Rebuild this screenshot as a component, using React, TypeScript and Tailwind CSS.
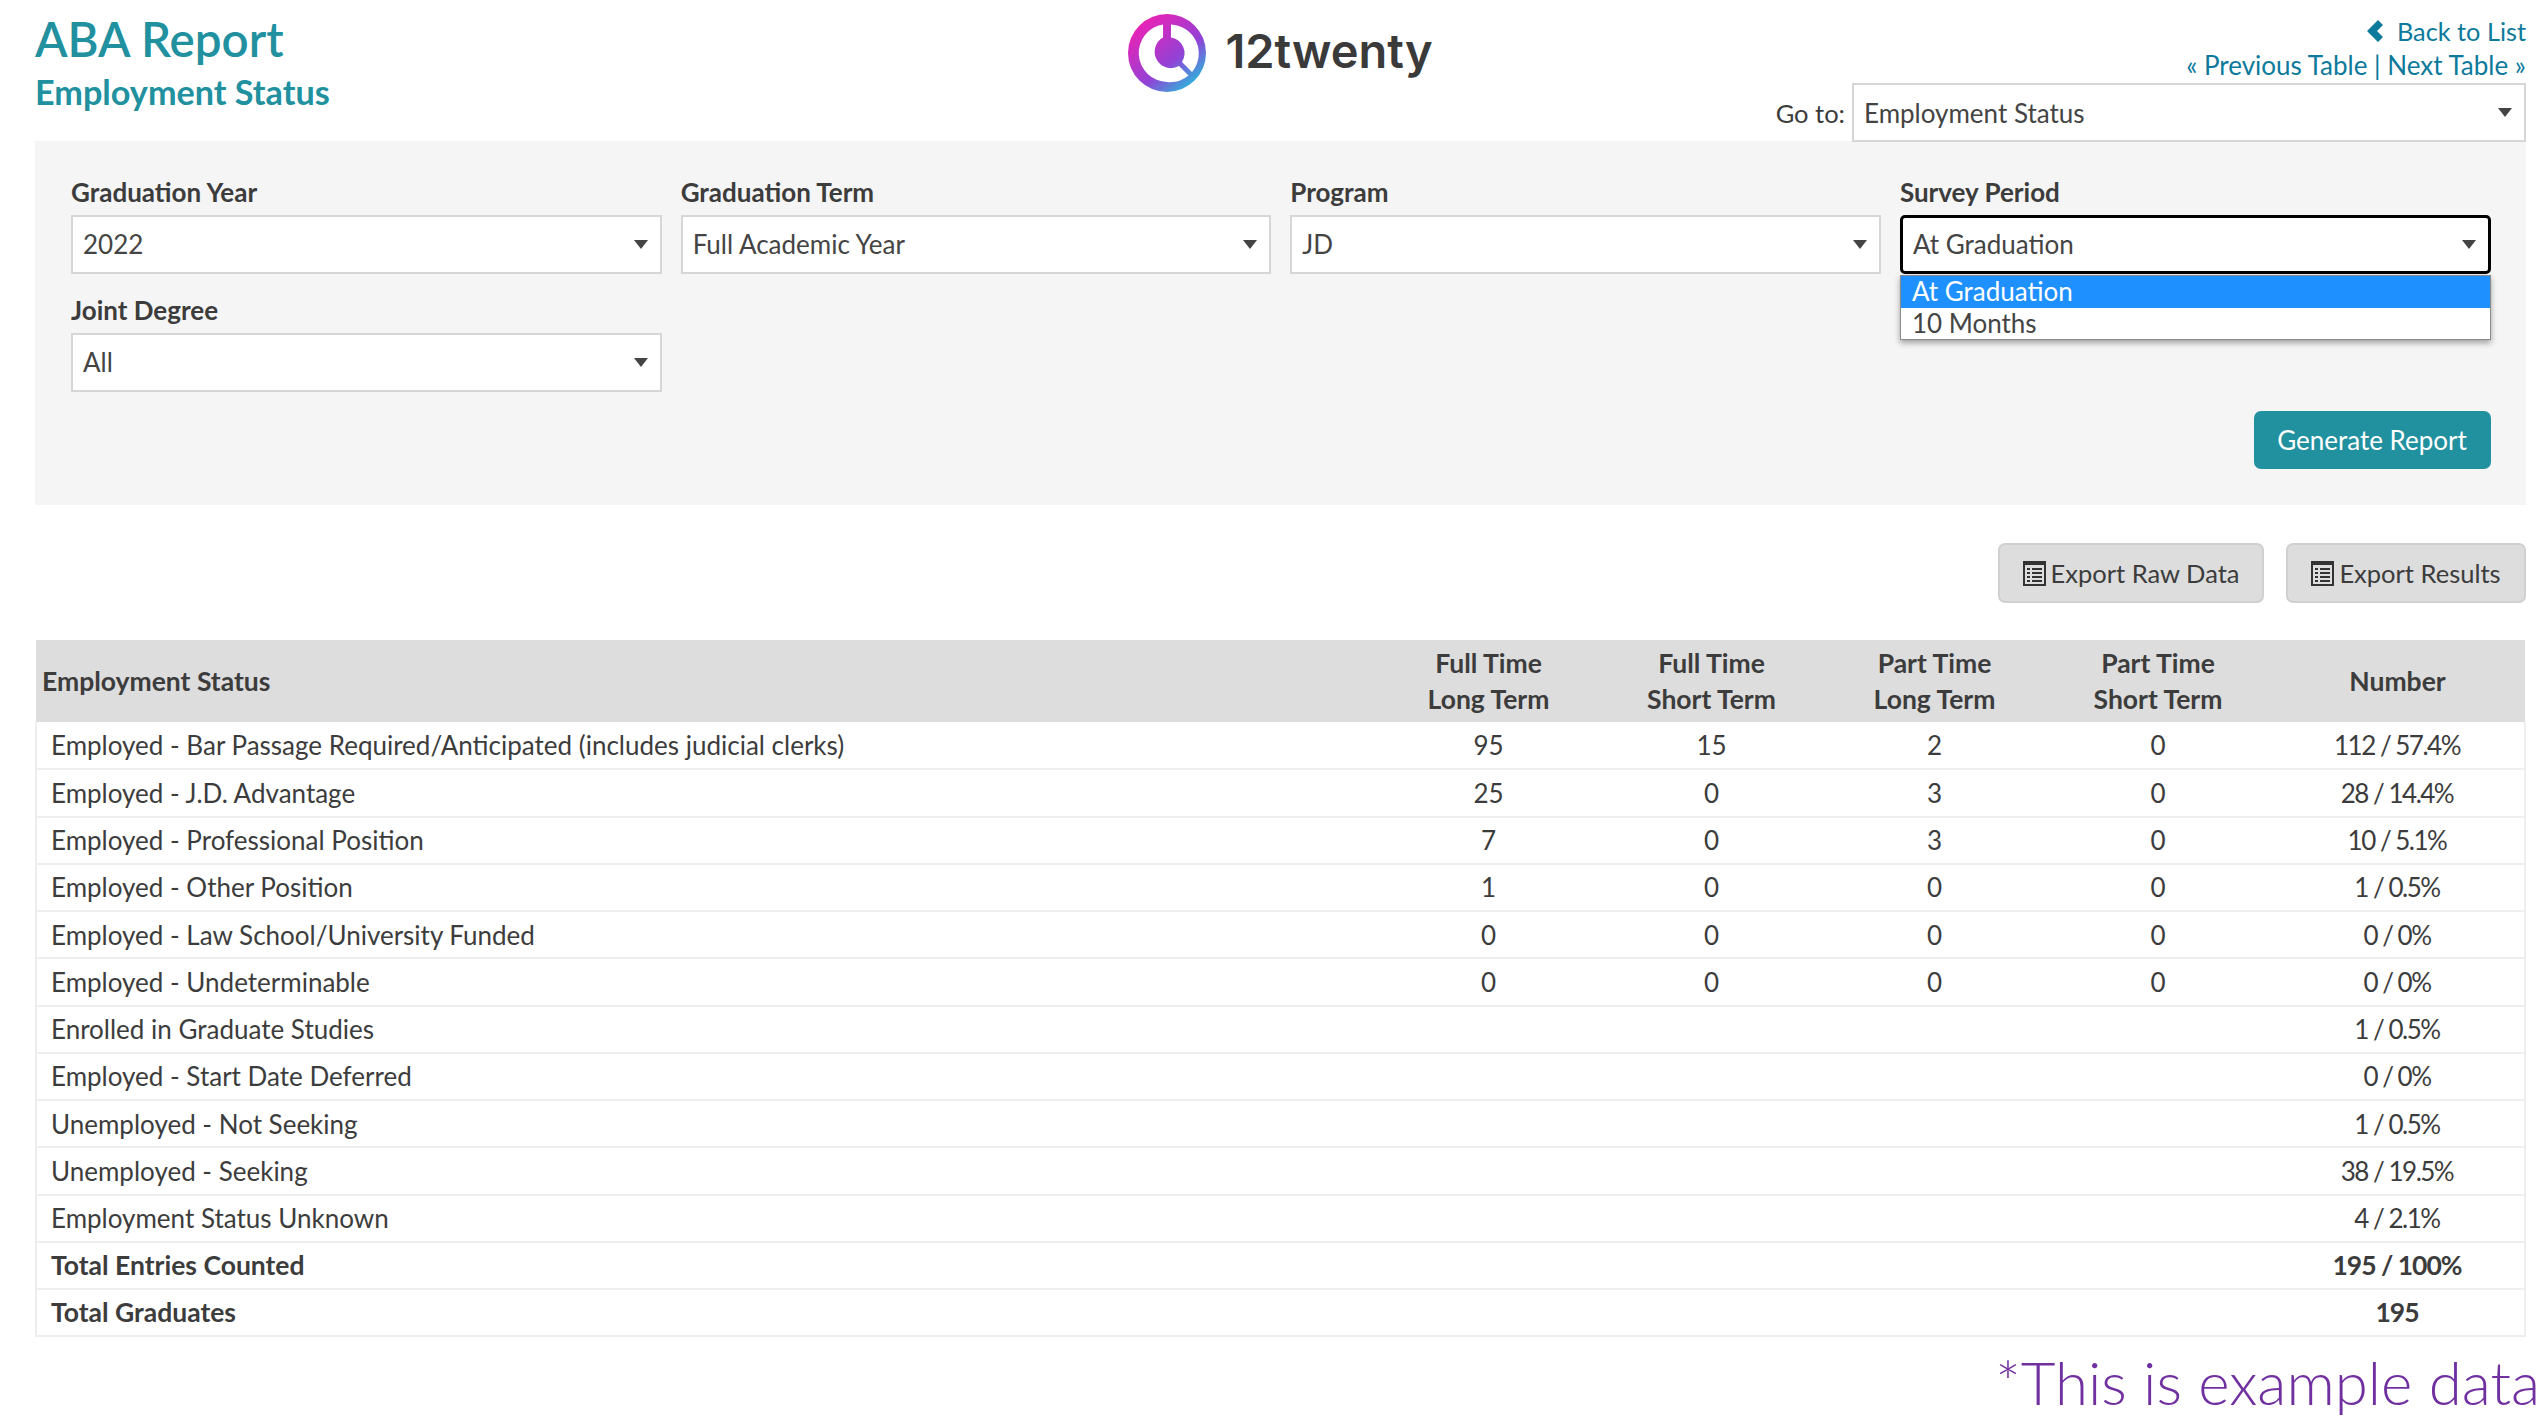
import React from 'react';

const rows = [
  { label: 'Employed - Bar Passage Required/Anticipated (includes judicial clerks)', cols: ['95', '15', '2', '0'], number: '112 / 57.4%' },
  { label: 'Employed - J.D. Advantage', cols: ['25', '0', '3', '0'], number: '28 / 14.4%' },
  { label: 'Employed - Professional Position', cols: ['7', '0', '3', '0'], number: '10 / 5.1%' },
  { label: 'Employed - Other Position', cols: ['1', '0', '0', '0'], number: '1 / 0.5%' },
  { label: 'Employed - Law School/University Funded', cols: ['0', '0', '0', '0'], number: '0 / 0%' },
  { label: 'Employed - Undeterminable', cols: ['0', '0', '0', '0'], number: '0 / 0%' },
  { label: 'Enrolled in Graduate Studies', cols: ['', '', '', ''], number: '1 / 0.5%' },
  { label: 'Employed - Start Date Deferred', cols: ['', '', '', ''], number: '0 / 0%' },
  { label: 'Unemployed - Not Seeking', cols: ['', '', '', ''], number: '1 / 0.5%' },
  { label: 'Unemployed - Seeking', cols: ['', '', '', ''], number: '38 / 19.5%' },
  { label: 'Employment Status Unknown', cols: ['', '', '', ''], number: '4 / 2.1%' },
  { label: 'Total Entries Counted', cols: ['', '', '', ''], number: '195 / 100%', bold: true },
  { label: 'Total Graduates', cols: ['', '', '', ''], number: '195', bold: true },
];

function Logo() {
  return (
    <svg width="78" height="78" viewBox="0 0 78 78">
      <defs>
        <linearGradient id="logoGrad" x1="0.15" y1="0.1" x2="0.85" y2="0.95">
          <stop offset="0" stopColor="#ec22b4" />
          <stop offset="0.6" stopColor="#9242d6" />
          <stop offset="1" stopColor="#22c0dc" />
        </linearGradient>
      </defs>
      <path
        fillRule="evenodd"
        fill="url(#logoGrad)"
        d="M39 0a39 39 0 1 0 0 78a39 39 0 1 0 0-78ZM35 10.4V23.5a16 16 0 1 0 16 28.5l9.5 9.5a29 29 0 0 1-21.5 6.5a29 29 0 0 1-4-57.6ZM43 10.4a29 29 0 0 1 21 47.6l-10 -10a16 16 0 0 0-11-24.5Z"
      />
    </svg>
  );
}

function Caret() {
  return <span className="w-0 h-0 border-l-[7px] border-r-[7px] border-t-[9px] border-l-transparent border-r-transparent border-t-[#444]" />;
}

function SelectBox({ value, focused }: { value: string; focused?: boolean }) {
  return (
    <div
      className={`h-[59px] bg-white flex items-center justify-between pl-[10px] pr-[12px] text-[26px] text-[#444] ${
        focused ? 'border-[3px] border-black rounded-[5px]' : 'border-2 border-[#d6d6d6]'
      }`}
    >
      <span>{value}</span>
      <Caret />
    </div>
  );
}

function Field({ label, value, focused, children }: { label: string; value: string; focused?: boolean; children?: React.ReactNode }) {
  return (
    <div className="relative">
      <div className="h-[47px] pt-[6px] text-[26px] font-bold text-[#3c3c3c] leading-[36px]">{label}</div>
      <SelectBox value={value} focused={focused} />
      {children}
    </div>
  );
}

function ListIcon() {
  return (
    <svg width="23" height="25" viewBox="0 0 23 25" className="shrink-0">
      <rect x="1" y="1" width="21" height="23" fill="none" stroke="#333" strokeWidth="2" />
      <rect x="1" y="1" width="21" height="3" fill="#333" />
      <g fill="#333">
        <rect x="4" y="7" width="3" height="2" />
        <rect x="9" y="7" width="10" height="2" />
        <rect x="4" y="11" width="3" height="2" />
        <rect x="9" y="11" width="10" height="2" />
        <rect x="4" y="15" width="3" height="2" />
        <rect x="9" y="15" width="10" height="2" />
        <rect x="4" y="19" width="3" height="2" />
        <rect x="9" y="19" width="10" height="2" />
      </g>
    </svg>
  );
}

function ExportButton({ label, width }: { label: string; width: string }) {
  return (
    <button className={`${width} h-[60px] bg-[#dddddd] border-2 border-[#d0d0d0] rounded-[7px] flex items-center justify-center gap-[5px] text-[25.5px] text-[#3c3c3c]`}>
      <ListIcon />
      <span>{label}</span>
    </button>
  );
}

export default function App() {
  return (
    <div className="w-[2545px] h-[1420px] bg-white overflow-hidden pl-[35px] pr-[19px] font-['Lato','Liberation_Sans',sans-serif] text-[#3c3c3c]">
      {/* Header */}
      <div className="h-[141px] grid grid-cols-[1fr_auto_1fr] relative z-10">
        <div className="pt-[11px]">
          <h1 className="text-[47.5px] font-semibold leading-[56px] text-[#21909f]">ABA Report</h1>
          <h2 className="text-[34.2px] font-bold leading-[40px] mt-[5px] text-[#21909f]">Employment Status</h2>
        </div>
        <div className="flex items-start gap-[19px] pt-[14px]">
          <Logo />
          <span className="text-[47px] font-semibold leading-[74px] text-[#3a3a3a] font-['Inter',sans-serif]">12twenty</span>
        </div>
        <div className="flex flex-col items-end text-[#0d7a9c] pt-[14px] leading-[34px]">
          <a className="flex items-center gap-[14px] text-[25.3px]">
            <svg width="16" height="22" viewBox="0 0 16 22" fill="#0d7a9c">
              <polygon points="11,0 16,5 10,11 16,17 11,22 0,11" />
            </svg>
            <span>Back to List</span>
          </a>
          <div className="text-[26px]">« Previous Table | Next Table »</div>
          <div className="flex items-center mt-[1px] w-full justify-end text-[#3c3c3c] text-[25.5px]">
            <span className="mr-[7px]">Go to:</span>
            <div className="w-[674px]">
              <SelectBox value="Employment Status" />
            </div>
          </div>
        </div>
      </div>

      {/* Filter panel */}
      <div className="h-[364px] bg-[#f5f5f5] pt-[27px] pl-[36px] pr-[35.5px] relative">
        <div className="grid grid-cols-4 gap-x-[19px] gap-y-[12px]">
          <Field label="Graduation Year" value="2022" />
          <Field label="Graduation Term" value="Full Academic Year" />
          <Field label="Program" value="JD" />
          <Field label="Survey Period" value="At Graduation" focused>
            <div className="absolute left-0 right-0 top-[107px] h-[65px] bg-white border border-[#8a8a8a] shadow-[0_3px_6px_rgba(0,0,0,0.35)] z-20 text-[26px] text-[#444] leading-[31px]">
              <div className="bg-[#1e90ff] text-white pl-[11px] h-[32px]">At Graduation</div>
              <div className="pl-[11px] h-[31px]">10 Months</div>
            </div>
          </Field>
          <Field label="Joint Degree" value="All" />
        </div>
        <div className="flex justify-end mt-[19px]">
          <button className="w-[237px] h-[58px] rounded-[7px] bg-[#21909f] text-white text-[26px]">Generate Report</button>
        </div>
      </div>

      {/* Export buttons */}
      <div className="flex justify-end gap-[22px] mt-[38px]">
        <ExportButton label="Export Raw Data" width="w-[266px]" />
        <ExportButton label="Export Results" width="w-[240px]" />
      </div>

      {/* Table */}
      <table className="w-[2491px] mt-[37px] border-collapse table-fixed text-[26px] text-[#3c3c3c]">
        <colgroup>
          <col className="w-[1341px]" />
          <col className="w-[223px]" />
          <col className="w-[223px]" />
          <col className="w-[223px]" />
          <col className="w-[224px]" />
          <col />
        </colgroup>
        <thead>
          <tr className="h-[82px] bg-[#dddddd] font-bold leading-[36px] text-[26.5px]">
            <th className="text-left font-bold pl-[6px]">Employment Status</th>
            <th className="font-bold">Full Time<br />Long Term</th>
            <th className="font-bold">Full Time<br />Short Term</th>
            <th className="font-bold">Part Time<br />Long Term</th>
            <th className="font-bold">Part Time<br />Short Term</th>
            <th className="font-bold">Number</th>
          </tr>
        </thead>
        <tbody className="border-l-2 border-r-2 border-b-2 border-[#eeeeee]">
          {rows.map((row) => (
            <tr key={row.label} className={`h-[47.25px] border-b-2 border-[#eeeeee] ${row.bold ? 'font-bold text-[26.5px]' : ''}`}>
              <td className="pl-[14px] pt-[1px]">{row.label}</td>
              {row.cols.map((c, i) => (
                <td key={i} className="text-center pt-[1px]">{c}</td>
              ))}
              <td className={`text-center pt-[1px] ${row.bold ? 'tracking-[-1px]' : 'tracking-[-1.5px]'}`}>{row.number}</td>
            </tr>
          ))}
        </tbody>
      </table>

      {/* Example data note */}
      <div className="text-right text-[60px] leading-[64px] mt-[13px] -mr-[14px] text-[#7030a0] font-light whitespace-nowrap">*This is example data</div>
    </div>
  );
}
